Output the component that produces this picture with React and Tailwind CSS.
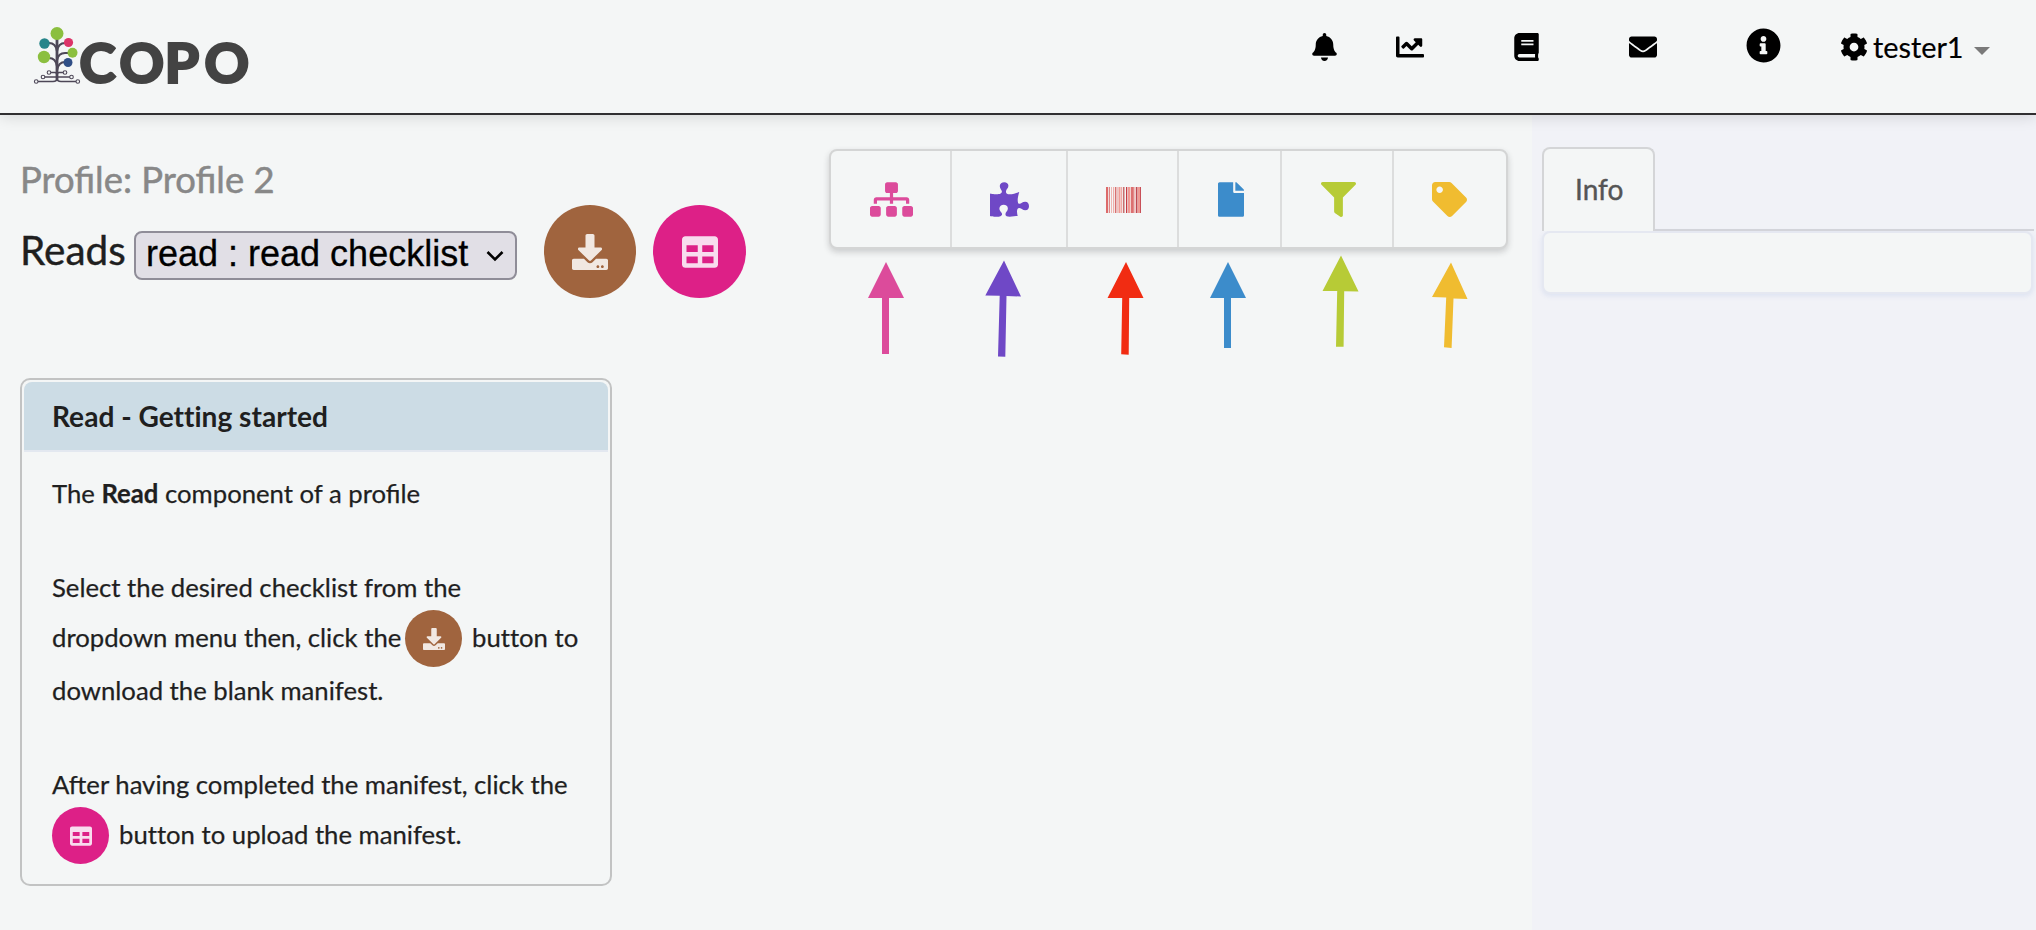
import React from "react";
import {
  FaBell, FaChartLine, FaBook, FaEnvelope, FaInfoCircle, FaCog, FaDownload,
  FaTable, FaSitemap, FaPuzzlePiece, FaFile, FaFilter, FaTag,
} from "react-icons/fa";

function Logo() {
  return (
    <svg className="h-[80px] w-[220px] shrink-0 overflow-visible" viewBox="32 20 220 80">
      <g fill="none" stroke="#4d4757" strokeWidth="2.2">
        <path d="M57 36V81" strokeWidth="2.8" />
        <path d="M57 51c-1-6-4-8-8-8h-4M57 51c1-6 4-8 8-8h4" />
        <path d="M57 66c-1-6-4-8-8-8h-5M57 60c1-5 4-7 8-7h7" />
        <path d="M57 70c1-5 4-8 8-8h3" />
        <path d="M51 72.500h4q2 0 2 3q0-3 2-3h4M45 77h25" strokeWidth="1.6" />
        <path d="M38 81.500h15q4 0 4-3q0 3 4 3h15" strokeWidth="1.6" />
      </g>
      <g fill="#f4f6f6" stroke="#4d4757" strokeWidth="1.1">
        <circle cx="49" cy="72.500" r="1.800" /><circle cx="65" cy="72.500" r="1.800" />
        <circle cx="43" cy="77" r="1.800" /><circle cx="71.500" cy="77" r="1.800" />
        <circle cx="36.200" cy="81.500" r="1.800" /><circle cx="77.800" cy="81.500" r="1.800" />
      </g>
      <circle cx="57" cy="33.500" r="6.500" fill="#8bbf3f" />
      <circle cx="44.500" cy="43.500" r="5.200" fill="#26858a" />
      <circle cx="68.500" cy="42.500" r="4.600" fill="#dc3468" />
      <circle cx="44" cy="57" r="6.200" fill="#8bbf3f" />
      <circle cx="72.500" cy="52.700" r="5" fill="#8bbf3f" />
      <circle cx="68" cy="62.500" r="4.500" fill="#304f86" />
      <text x="79.200 119.300 164.500 204.300" y="83" fontFamily="Lato, sans-serif" fontWeight="900" fontSize="55.500" fill="#434343" stroke="#434343" strokeWidth="2">COPO</text>
    </svg>
  );
}

const BARS = [
  [0, 2.2, "#dc6a6a"], [3, 1, "#e08888"], [5, 1, "#f0b8b4"], [7, 1.2, "#f0b0ac"], [9, 1.4, "#d87070"],
  [11.300, 0.800, "#ecb0ac"], [12.500, 2, "#f09c96"], [15, 1.2, "#f0a8a4"], [17.200, 1.2, "#bc4c4c"],
  [20, 1.300, "#c83c44"], [22, 2.400, "#f09a94"], [25, 2.800, "#dc7070"], [28.300, 0.800, "#f0a8a4"],
  [29.800, 1.700, "#c04850"], [31.800, 2.200, "#f09a94"], [34, 1, "#c85058"],
];

function Barcode() {
  return (
    <svg className="h-[26px] w-[35px]" viewBox="0 0 35 26">
      {BARS.map(([x, w, c]) => <rect key={x} x={x} y="0" width={w} height="26" fill={c} />)}
    </svg>
  );
}

function Header() {
  return (
    <header className="relative z-10 flex h-[115px] items-start border-b-2 border-[#302f31] bg-[#f4f6f6] shadow-[0_2px_14px_rgba(0,0,0,0.13)]">
      <div className="flex flex-1 pl-8 pt-5"><Logo /></div>
      <nav className="flex h-[95px] items-start text-[28.8px] leading-[28px] text-black">
        <FaBell className="mt-[33px] h-7 w-[25px]" />
        <FaChartLine className="ml-[59px] mt-[33px] size-7" />
        <FaBook className="ml-[90px] mt-[33px] h-7 w-[25px]" />
        <FaEnvelope className="ml-[90px] mt-[33px] size-7" />
        <FaInfoCircle className="ml-[89px] mt-[28px] size-[35px]" />
        <a className="ml-[59px] mr-[46px] mt-[33px] flex items-start">
          <FaCog className="size-7" />
          <span className="ml-[5px] w-[90px] whitespace-nowrap [-webkit-text-stroke:0.2px]">tester1</span>
          <svg className="ml-[11px] mt-[14px] h-2 w-4" viewBox="0 0 16 8"><path d="M0 0h16L8 8z" fill="#7a7a7a" /></svg>
        </a>
      </nav>
    </header>
  );
}

function Tools() {
  const cell = "flex items-center justify-center border-r-2 border-[#dcdddd] pt-[1px]";
  return (
    <div className="flex h-[100px] w-[679px] rounded-lg border-2 border-[#d4d5d5] bg-[#f4f6f6] shadow-[0_3px_6px_rgba(34,36,38,0.2)]">
      <div className={`${cell} w-[121px] pl-[2px] text-[#dc4b9b]`}><FaSitemap className="h-[35px] w-[43px]" /></div>
      <div className={`${cell} w-[116px] text-[#6f48c6]`}><FaPuzzlePiece className="h-[35px] w-[39px]" /></div>
      <div className={`${cell} w-[111px] pl-[1px]`}><Barcode /></div>
      <div className={`${cell} w-[103px] pl-[2px] text-[#3c8ccb]`}><FaFile className="h-[35px] w-[26px]" /></div>
      <div className={`${cell} w-[112px] pl-[2px] text-[#b7cb36]`}><FaFilter className="size-[35px]" /></div>
      <div className="flex flex-1 items-center justify-center pr-[1px] pt-[1px] text-[#f0bc30]"><FaTag className="size-[35px]" /></div>
    </div>
  );
}

function Arrows() {
  return (
    <svg className="pointer-events-none absolute left-[829px] top-[250px] h-[110px] w-[680px]" viewBox="829 250 680 110">
      <path fill="#dc4b9b" d="M886 262L904 298H889V354H882V298H868Z" />
      <path fill="#6f48c6" d="M1004 260.500L1021 296.500L1006.500 296L1005.300 356.700L998 356.500L999.700 295.800L985.300 295.500Z" />
      <path fill="#f12c12" d="M1126 262L1143.500 298H1129.200L1128.700 354.800L1121.200 354.300L1122.200 298H1107.500Z" />
      <path fill="#3c8ccb" d="M1228 262L1246 298H1231V348H1224V298H1210Z" />
      <path fill="#b7cb36" d="M1341 255.500L1358.500 291.500L1344.200 291.300L1343.600 346.700H1336L1337.200 291H1322.500Z" />
      <path fill="#f0bc30" d="M1451 262.500L1467.500 299L1453.500 298.500L1451.600 348L1444 347.300L1446.200 297.500L1432 297Z" />
    </svg>
  );
}

function GettingStarted() {
  return (
    <section className="ml-5 mt-20 h-[508px] w-[592px] rounded-[10px] border-2 border-[#c2c3c3] p-[2px]">
      <div className="h-[70px] rounded-t-lg border-b-2 border-[#e3e8f0] bg-[#ccdce5] pl-7">
        <h2 className="pt-[10px] text-[28.100px] font-bold leading-[48px] [font-variant-ligatures:none]">Read - Getting started</h2>
      </div>
      <div className="whitespace-pre pl-7 pt-[18px] text-[25.700px] leading-[47px] [-webkit-text-stroke:0.25px]">
        <p>The <b>Read</b> component of a profile</p>
        <p className="mt-[47px] h-[46px]">Select the desired checklist from the</p>
        <p className="flex h-[57px] items-center">
          <span className="-mt-[2px] w-[348px]">dropdown menu then, click the</span>
          <span className="ml-[5px] flex size-[57px] items-center justify-center rounded-full bg-[#a0643e]"><FaDownload className="size-[22px] text-[#f1e8e2]" /></span>
          <span className="-mt-[2px] ml-[10px] [font-variant-ligatures:none]">button to</span>
        </p>
        <p className="h-[46px]">download the blank manifest.</p>
        <p className="mt-[48px] h-[46px]">After having completed the manifest, click the</p>
        <p className="flex h-[57px] items-center">
          <span className="flex size-[57px] items-center justify-center rounded-full bg-[#dd2087]"><FaTable className="size-[22px] text-[#f8dcee]" /></span>
          <span className="-mt-[2px] ml-[10px] [font-variant-ligatures:none]">button to upload the manifest.</span>
        </p>
      </div>
    </section>
  );
}

function Sidebar() {
  return (
    <aside className="w-[504px] bg-[#f1f2f7] pl-[10px] pr-[2px] pt-8">
      <div className="flex h-[84px] w-[492px]">
        <div className="w-[113px] rounded-t-lg border-2 border-b-0 border-[#d4d5d7] bg-[#f4f6f6] pl-[31px] pt-[24px] text-[28px] leading-[33px] text-[#555] [-webkit-text-stroke:0.4px]">Info</div>
        <div className="flex-1 border-b-2 border-[#d3d4da]" />
      </div>
      <div className="h-[63px] w-[491px] rounded-lg border-2 border-[#e5e8f1] bg-[#f4f6f6] shadow-[0_2px_5px_rgba(120,150,220,0.16)]" />
    </aside>
  );
}

export default function App() {
  return (
    <div className="flex h-[930px] w-[2036px] flex-col overflow-hidden bg-[#f4f6f6] font-[Lato,sans-serif] text-[#1f1f1f]">
      <Header />
      <div className="relative flex flex-1">
        <main className="w-[1532px]">
          <div className="flex h-[183px]">
            <div className="w-[829px] pl-5 pt-[42px]">
              <h1 className="text-[36.400px] leading-[44px] text-[#888] [-webkit-text-stroke:0.5px]">Profile: Profile 2</h1>
              <div className="mt-1 flex h-[93px] items-start">
                <h2 className="mt-[21px] w-[114px] text-[40.500px] leading-[48px] [-webkit-text-stroke:0.4px]">Reads</h2>
                <button className="mt-[26px] flex h-[49px] w-[383px] items-start rounded-lg border-2 border-[#8f8d98] bg-[#e1dfe6] pl-[10px] font-['Liberation_Sans',sans-serif] text-[36px] leading-[41px] text-black [-webkit-text-stroke:0.3px]">
                  <span className="w-[340px] whitespace-pre text-left">read : read checklist</span>
                  <svg className="mt-[17px] h-3 w-[18px]" viewBox="0 0 18 12"><path d="M1.500 2L9 9.500L16.500 2" fill="none" stroke="#000" strokeWidth="2.600" /></svg>
                </button>
                <button className="ml-[27px] flex h-[93px] w-[92px] items-center justify-center rounded-full bg-[#a0643e] text-[#f1e8e2]"><FaDownload className="size-9" /></button>
                <button className="ml-[17px] flex size-[93px] items-center justify-center rounded-full bg-[#dd2087] text-[#f8dcee]"><FaTable className="size-9" /></button>
              </div>
            </div>
            <div className="pt-[34px]"><Tools /></div>
          </div>
          <GettingStarted />
        </main>
        <Sidebar />
        <div className="pointer-events-none absolute left-0 top-[-115px]"><Arrows /></div>
      </div>
    </div>
  );
}
